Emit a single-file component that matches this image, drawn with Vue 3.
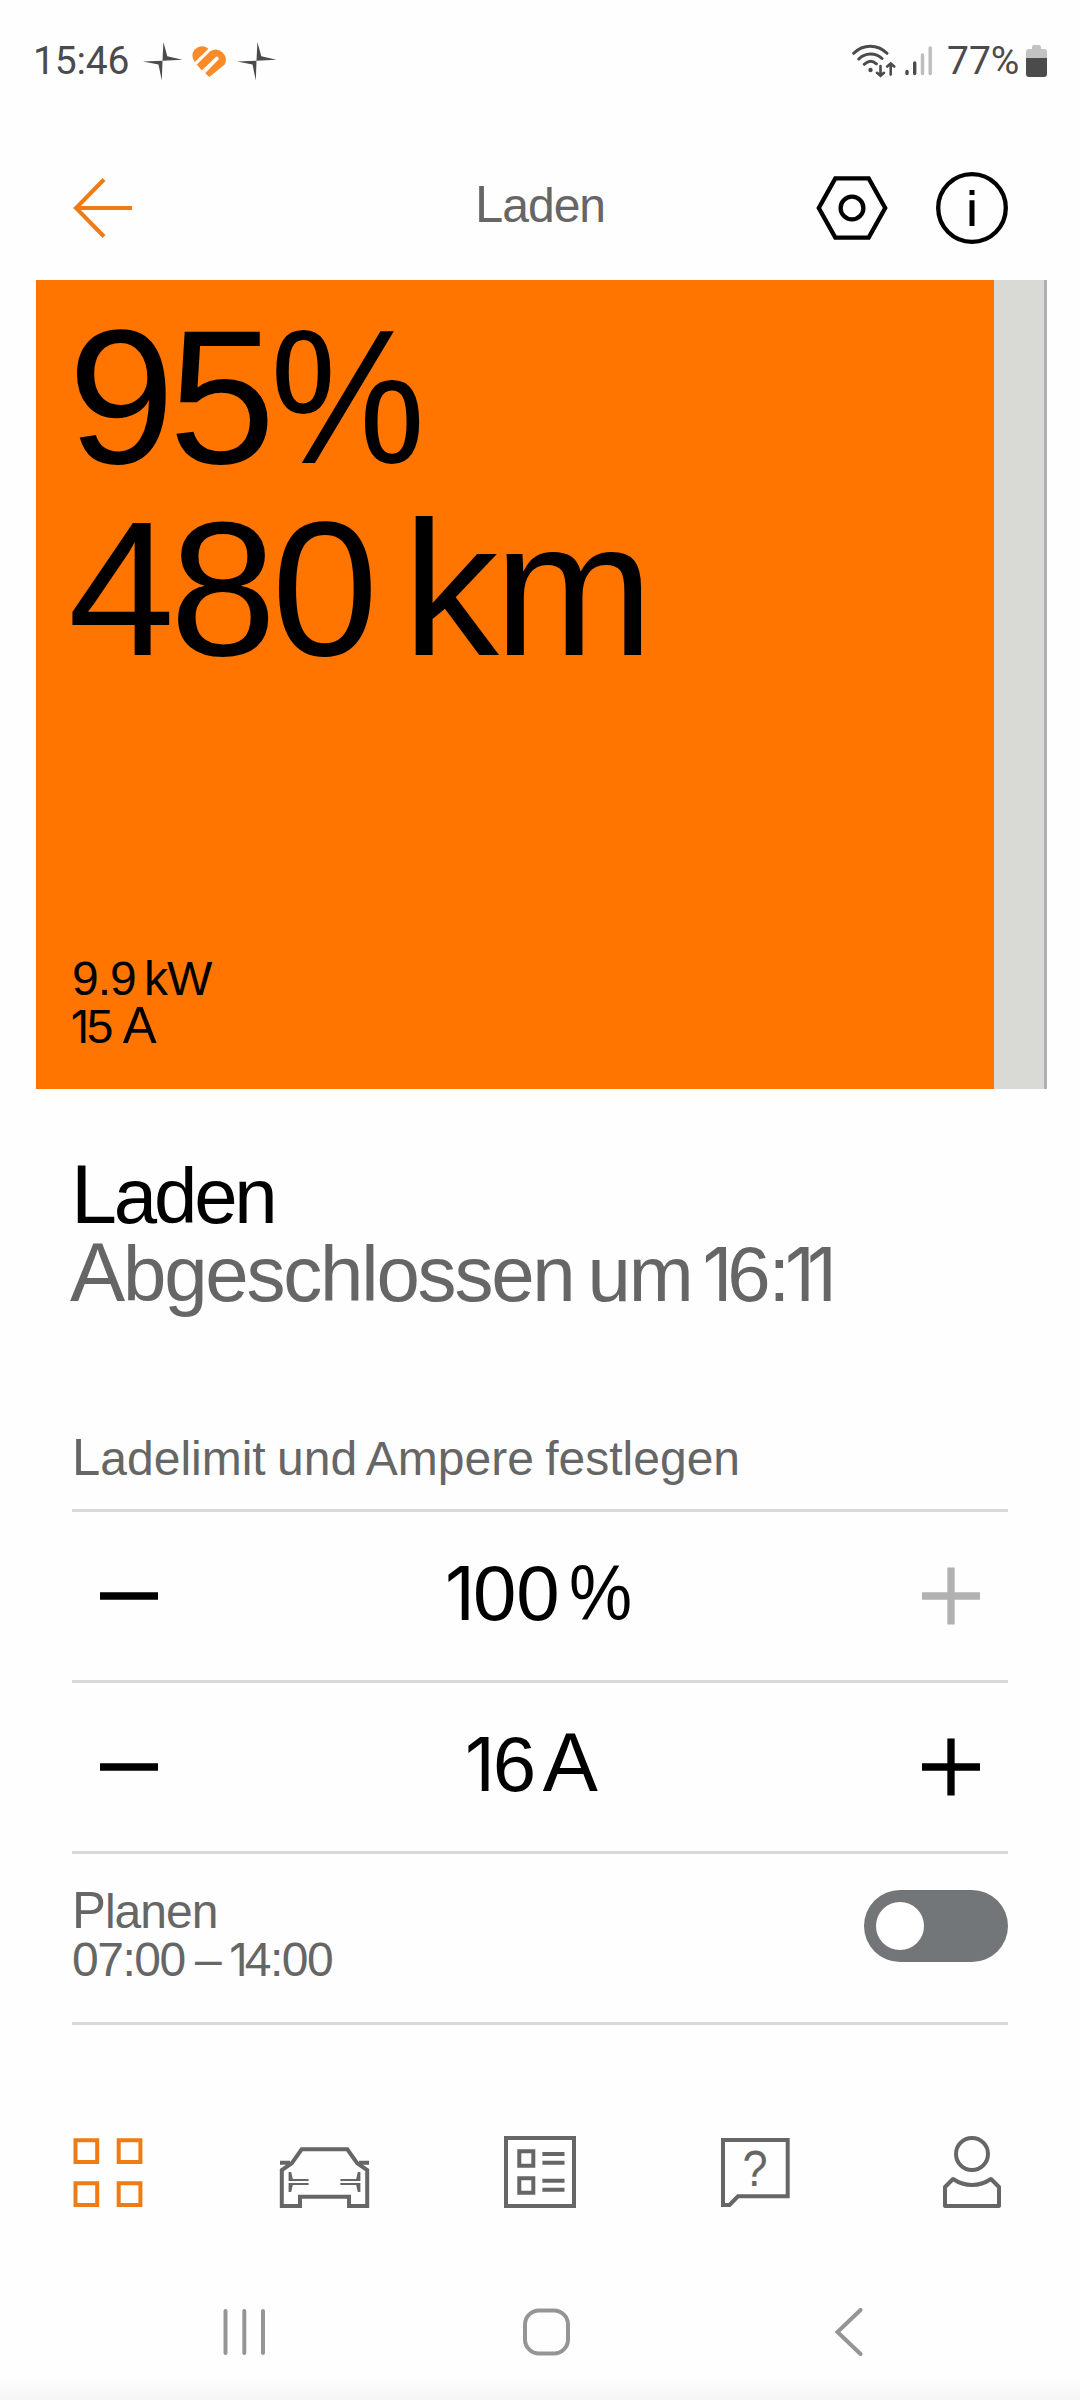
<script setup>
import { ref } from 'vue'

const planned = ref(false)
const level = 95
</script>

<template>
  <main class="phone">
    <header class="status">
      <span class="clock">15:46</span>
      <svg class="spark" width="40" height="39" viewBox="0 0 40 39"><path d="M20.4 0 19.5 18.7 39.5 17.7 24.3 14.2zM0 19.5 15.5 22.6 18.8 38.5 19.5 18.7z" /></svg>
      <svg class="heart" width="37" height="31" viewBox="0 0 37 31">
        <path d="M3.800 16A9.500 9.500 0 0 1 15.500 1.400L17.500 2.800z" />
        <path d="M5.800 18.600 19.500 5A10.200 10.200 0 0 1 33.700 18.400L18.300 31 14.200 27.200 27.200 13.800A1.700 1.700 0 0 0 24.600 11.200L10.800 24.600z" />
      </svg>
      <svg class="spark" width="40" height="39" viewBox="0 0 40 39"><path d="M20.4 0 19.5 18.7 39.5 17.7 24.3 14.2zM0 19.5 15.5 22.6 18.8 38.5 19.5 18.7z" /></svg>
      <span class="grow"></span>
      <svg class="wifi" width="44" height="34" viewBox="0 0 44 34" fill="none" stroke="#4b4b4b" stroke-width="3" stroke-linecap="round">
        <path d="M1.7 9.3C11-.1 25.500-.1 35 9.300M6.800 15C13.300 8.500 23.500 8.500 30 14.500M12.300 20.300C16 16.600 20.500 16.500 24.400 19.800" />
        <circle cx="18.500" cy="26" r="2.200" fill="#4b4b4b" stroke="none" />
        <path d="M28.500 22v9.500M25 28.800l3.500 3 3.500-3M38.700 30.500V20M35.200 22.500l3.500-3 3.500 3" stroke-width="2.600" />
      </svg>
      <svg class="signal" width="28" height="30" viewBox="0 0 28 30" stroke-width="3.400" stroke-linecap="round">
        <path d="M2 25.500V27.500M9.700 17V27.500" stroke="#4b4b4b" />
        <path d="M17.500 9V27.500M25.200 2V27.500" stroke="#bdbdbd" />
      </svg>
      <span class="charge">77%</span>
      <svg class="battery" width="21" height="32" viewBox="0 0 21 32">
        <path d="M6 4V2a2 2 0 0 1 2-2h5a2 2 0 0 1 2 2v2h3a3 3 0 0 1 3 3v6H0V7a3 3 0 0 1 3-3z" fill="#c2c2c2" />
        <path d="M0 13h21v16a3 3 0 0 1-3 3H3a3 3 0 0 1-3-3z" fill="#4b4b4b" />
      </svg>
    </header>

    <nav class="top">
      <svg width="60" height="60" viewBox="0 0 60 60" fill="none" stroke="#ee7b14" stroke-width="4"><path d="M32 1.500 4 30 32 58.500M4 30H60" /></svg>
      <h1>Laden</h1>
      <div class="actions">
        <svg width="72" height="72" viewBox="0 0 72 72" fill="none" stroke="#000" stroke-width="4.300">
          <path d="M19.300 6.400H52.700L69.200 36 52.700 65.600H19.300L2.800 36z" /><circle cx="36" cy="36" r="11.400" />
        </svg>
        <svg width="72" height="72" viewBox="0 0 72 72" fill="none" stroke="#000">
          <circle cx="36" cy="36" r="33.800" stroke-width="4.300" /><path d="M36 18v5M36 28.300v25.700" stroke-width="5" />
        </svg>
      </div>
    </nav>

    <section class="card">
      <div class="fill" :style="{ width: level + '%' }">
        <div class="big">
          <div class="soc">95<span class="pct">%</span></div>
          <div>480 km</div>
        </div>
        <div class="power">
          <div>9.9 kW</div>
          <div class="amps"><span class="one">1</span>5 <span class="cap">A</span></div>
        </div>
      </div>
    </section>

    <section class="state">
      <h2>Laden</h2>
      <p>Abgeschlossen um <span class="one">1</span>6:<span class="one">1</span><span class="one">1</span></p>
    </section>

    <section class="settings">
      <h3>Ladelimit und Ampere festlegen</h3>
      <div class="row">
        <svg class="sign" width="58" height="58" viewBox="0 0 58 58"><path d="M0 29H58" /></svg>
        <div class="value limit"><span class="one">1</span>00 <span class="pct">%</span></div>
        <svg class="sign off" width="58" height="58" viewBox="0 0 58 58"><path d="M0 29H58M29 .5V57.500" /></svg>
      </div>
      <div class="row">
        <svg class="sign" width="58" height="58" viewBox="0 0 58 58"><path d="M0 29H58" /></svg>
        <div class="value current"><span class="one">1</span>6 <span class="cap">A</span></div>
        <svg class="sign" width="58" height="58" viewBox="0 0 58 58"><path d="M0 29H58M29 .5V57.500" /></svg>
      </div>
      <div class="row plan">
        <div class="plan-text">
          <div class="plan-name">Planen</div>
          <div class="hours">07:00 – <span class="one">1</span>4:00</div>
        </div>
        <button class="toggle" :class="{ on: planned }" @click="planned = !planned"><i></i></button>
      </div>
    </section>

    <nav class="tabs">
      <svg class="active" viewBox="0 0 72 72"><path d="M3.500 4.200h21.700v21.700H3.500zM46.700 4.200h21.700v21.700H46.700zM3.500 47.200h21.700v21.700H3.500zM46.700 47.200h21.700v21.700H46.700z" /></svg>
      <svg viewBox="0 0 72 72">
        <path d="M-6.200 70V34L3.700 27.300 13.700 13.300H59.300L69.300 27.300 79.200 34V70H61V60.700H12V70zM-8 26.700H2M71 26.700H81" />
        <path class="solid" d="M.6 36h2.600l1.600 7H20.600v2H.6zM.6 47h20v2H4.800l-1.600 7H.6zM72.400 36h-2.600l-1.600 7H52.400v2h20zM72.400 47h-20v2h15.800l1.600 7h2.600z" />
      </svg>
      <svg viewBox="0 0 72 72"><path d="M2 2h68v68H2zM15.300 15.300h14v14.400h-14zM15.300 42.300h14v14.400h-14zM38.400 18H60.500M38.400 26.800H60.500M38.400 44.800H60.500M38.400 53.700H60.500" /></svg>
      <svg viewBox="0 0 72 72"><path d="M3 4H67.700V60.300H18L9.500 69H3z" /><text x="39" y="50" text-anchor="middle" transform="scale(.9 1)">?</text></svg>
      <svg viewBox="0 0 72 72"><circle cx="36" cy="18" r="16" /><path d="M9 70V51L17 43C29 51 43 51 55 43L63 51V70z" stroke-linejoin="round" /></svg>
    </nav>

    <footer class="system">
      <svg width="60" height="48" viewBox="0 0 60 48"><path d="M11.500 3V45M30.300 3V45M49 3V45" /></svg>
      <svg width="60" height="48" viewBox="0 0 60 48"><rect x="8" y="2.500" width="43" height="43" rx="14" /></svg>
      <svg width="60" height="48" viewBox="0 0 60 48"><path d="M41.500 2 18.500 24 41.500 46" /></svg>
    </footer>
  </main>
</template>

<style>
body { background: #fefefe; }
</style>

<style scoped>
.phone {
  width: 1080px;
  height: 2400px;
  display: flex;
  flex-direction: column;
  overflow: hidden;
  background: #fefefe;
  color: #000;
  font-family: "Liberation Sans", Arial, sans-serif;
}
svg { flex: none; display: block; }
h1, h2, h3, p { margin: 0; font-weight: 400; white-space: nowrap; }

.status {
  height: 136px;
  box-sizing: border-box;
  padding: 37px 33px 51px 33px;
  display: flex;
  align-items: center;
  color: #4b4b4b;
  font: 400 39px/48px Roboto, sans-serif;
}
.clock { width: 110px; letter-spacing: -.2px; }
.spark { fill: #4b4b4b; margin-top: 1px; }
.heart { fill: #fb8b28; margin: 0 9px 0 8px; }
.grow { flex: 1; }
.signal { margin: 0 14px 0 9px; }
.charge { width: 79px; }

.top {
  height: 144px;
  padding: 0 72px 0 72px;
  display: grid;
  grid-template-columns: 1fr auto 1fr;
  align-items: center;
}
.top h1 {
  font-size: 48px;
  line-height: 48px;
  letter-spacing: -1px;
  color: #666;
  padding-bottom: 4px;
}
.actions { display: flex; justify-content: flex-end; gap: 48px; }

.card {
  height: 809px;
  flex: none;
  margin: 0 33px 0 36px;
  box-sizing: border-box;
  background: #d9dad5;
  border-right: 3px solid #b0b1ad;
}
.fill {
  height: 100%;
  box-sizing: border-box;
  padding: 21px 0 38px 32px;
  background: #ff7500;
  display: flex;
  flex-direction: column;
  justify-content: space-between;
  white-space: nowrap;
}
.big { font-size: 192px; line-height: 192px; letter-spacing: -5px; word-spacing: -19px; }
.soc { letter-spacing: -6px; }
.pct { display: inline-block; transform: scaleX(.91); transform-origin: 0 50%; }
.power { font-size: 48px; line-height: 48px; letter-spacing: -1px; word-spacing: -4px; padding-left: 4px; }
.amps { word-spacing: -2px; }
.one { font-family: Inter, sans-serif; font-size: .945em; line-height: 0; margin: 0 -.03em; }
.cap { font-size: 1.06em; line-height: 0; }

.state { padding: 68px 70px 0; font-size: 78px; line-height: 78px; }
.state h2 { font-size: 78px; letter-spacing: -3.200px; height: 78px; padding-left: 1px; }
.state p { color: #666; letter-spacing: -2.200px; word-spacing: -5.500px; height: 78px; }
.state .one { margin: 0 -.04em; }
.state h2::first-letter, .state p::first-letter, h3::first-letter, .top h1::first-letter, .plan-name::first-letter { font-size: 1.06em; line-height: 0; }

.settings { padding: 122px 72px 0; }
.settings h3 {
  height: 74px;
  font-size: 48px;
  line-height: 48px;
  color: #666;
  word-spacing: -2px;
  border-bottom: 3px solid #d9d9d9;
}
.row {
  height: 168px;
  padding: 0 28px;
  display: flex;
  align-items: center;
  justify-content: space-between;
  border-bottom: 3px solid #d9d9d9;
}
.sign { fill: none; stroke: #000; stroke-width: 7.300px; }
.sign.off { stroke: #b1b1b1; }
.value { font-size: 78px; line-height: 78px; word-spacing: -12px; padding-bottom: 6px; }
.limit { padding-left: 6px; }
.current { padding-right: 15px; word-spacing: -15px; }
.plan { padding: 0; align-items: flex-start; }
.plan-text { padding-top: 34px; font-size: 48px; line-height: 48px; color: #666; letter-spacing: -1px; }
.plan-text > div { height: 48px; }
.hours { letter-spacing: -1.500px; word-spacing: -1.500px; }
.toggle {
  width: 144px;
  height: 72px;
  margin: 36px 0 0;
  padding: 12px;
  border: 0;
  border-radius: 36px;
  background: #737678;
  display: flex;
}
.toggle i { width: 48px; height: 48px; border-radius: 50%; background: #fff; }
.toggle.on { justify-content: flex-end; background: #ff7500; }

.tabs { margin-top: 111px; padding: 0 72px; display: flex; justify-content: space-between; }
.tabs svg { width: 72px; height: 72px; overflow: visible; fill: none; stroke: #666; stroke-width: 4px; }
.tabs .active { stroke: #ee7b14; }
.tabs .solid, .tabs text { fill: #666; stroke: none; }
.tabs text { font-size: 50px; }

.system {
  flex: 1;
  padding: 100px 201px 0 214px;
  display: flex;
  justify-content: space-between;
  align-items: flex-start;
  background: linear-gradient(to bottom, #fefefe 168px, #f5f5f5 192px);
}
.system svg { fill: none; stroke: #959595; stroke-width: 4px; stroke-linecap: round; }
</style>
